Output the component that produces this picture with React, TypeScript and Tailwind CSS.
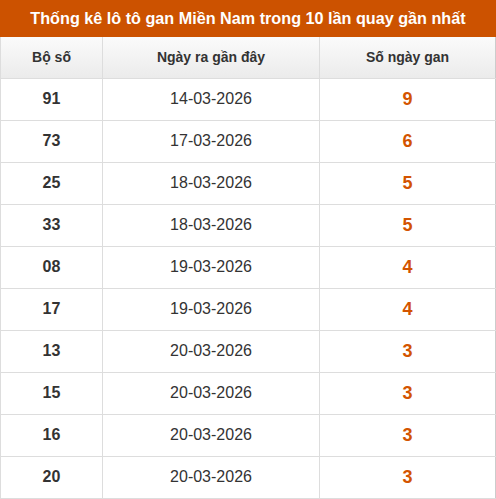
import React from 'react';

const rows = [
    { so: '91', ngay: '14-03-2026', gan: 9 },
    { so: '73', ngay: '17-03-2026', gan: 6 },
    { so: '25', ngay: '18-03-2026', gan: 5 },
    { so: '33', ngay: '18-03-2026', gan: 5 },
    { so: '08', ngay: '19-03-2026', gan: 4 },
    { so: '17', ngay: '19-03-2026', gan: 4 },
    { so: '13', ngay: '20-03-2026', gan: 3 },
    { so: '15', ngay: '20-03-2026', gan: 3 },
    { so: '16', ngay: '20-03-2026', gan: 3 },
    { so: '20', ngay: '20-03-2026', gan: 3 },
];

export default function App() {
    return (
        <div className="w-[496px] bg-white font-['Liberation_Sans',Arial,sans-serif] text-[#333]">
            <div className="h-[37px] bg-[#cc5200] text-white text-[16.2px] font-bold flex items-center justify-center">
                Thống kê lô tô gan Miền Nam trong 10 lần quay gần nhất
            </div>
            <table className="w-full border-collapse table-fixed">
                <thead>
                    <tr className="h-[41px] bg-gradient-to-b from-[#fbfbfb] to-[#ebebeb] text-[14px] font-bold">
                        <th className="w-[102px] border border-[#ddd] border-t-0">Bộ số</th>
                        <th className="w-[217px] border border-[#ddd] border-t-0 border-x-0">Ngày ra gần đây</th>
                        <th className="border border-[#ddd] border-t-0 border-r-[#ccc]">Số ngày gan</th>
                    </tr>
                </thead>
                <tbody>
                    {rows.map(r => (
                        <tr key={r.so} className="h-[42px] text-center">
                            <td className="border border-[#ddd] text-[16px] font-bold">{r.so}</td>
                            <td className="border border-[#ddd] text-[16px]">{r.ngay}</td>
                            <td className="border border-[#ddd] border-r-[#ccc] text-[18px] font-bold text-[#d35400]">{r.gan}</td>
                        </tr>
                    ))}
                </tbody>
            </table>
        </div>
    );
}
